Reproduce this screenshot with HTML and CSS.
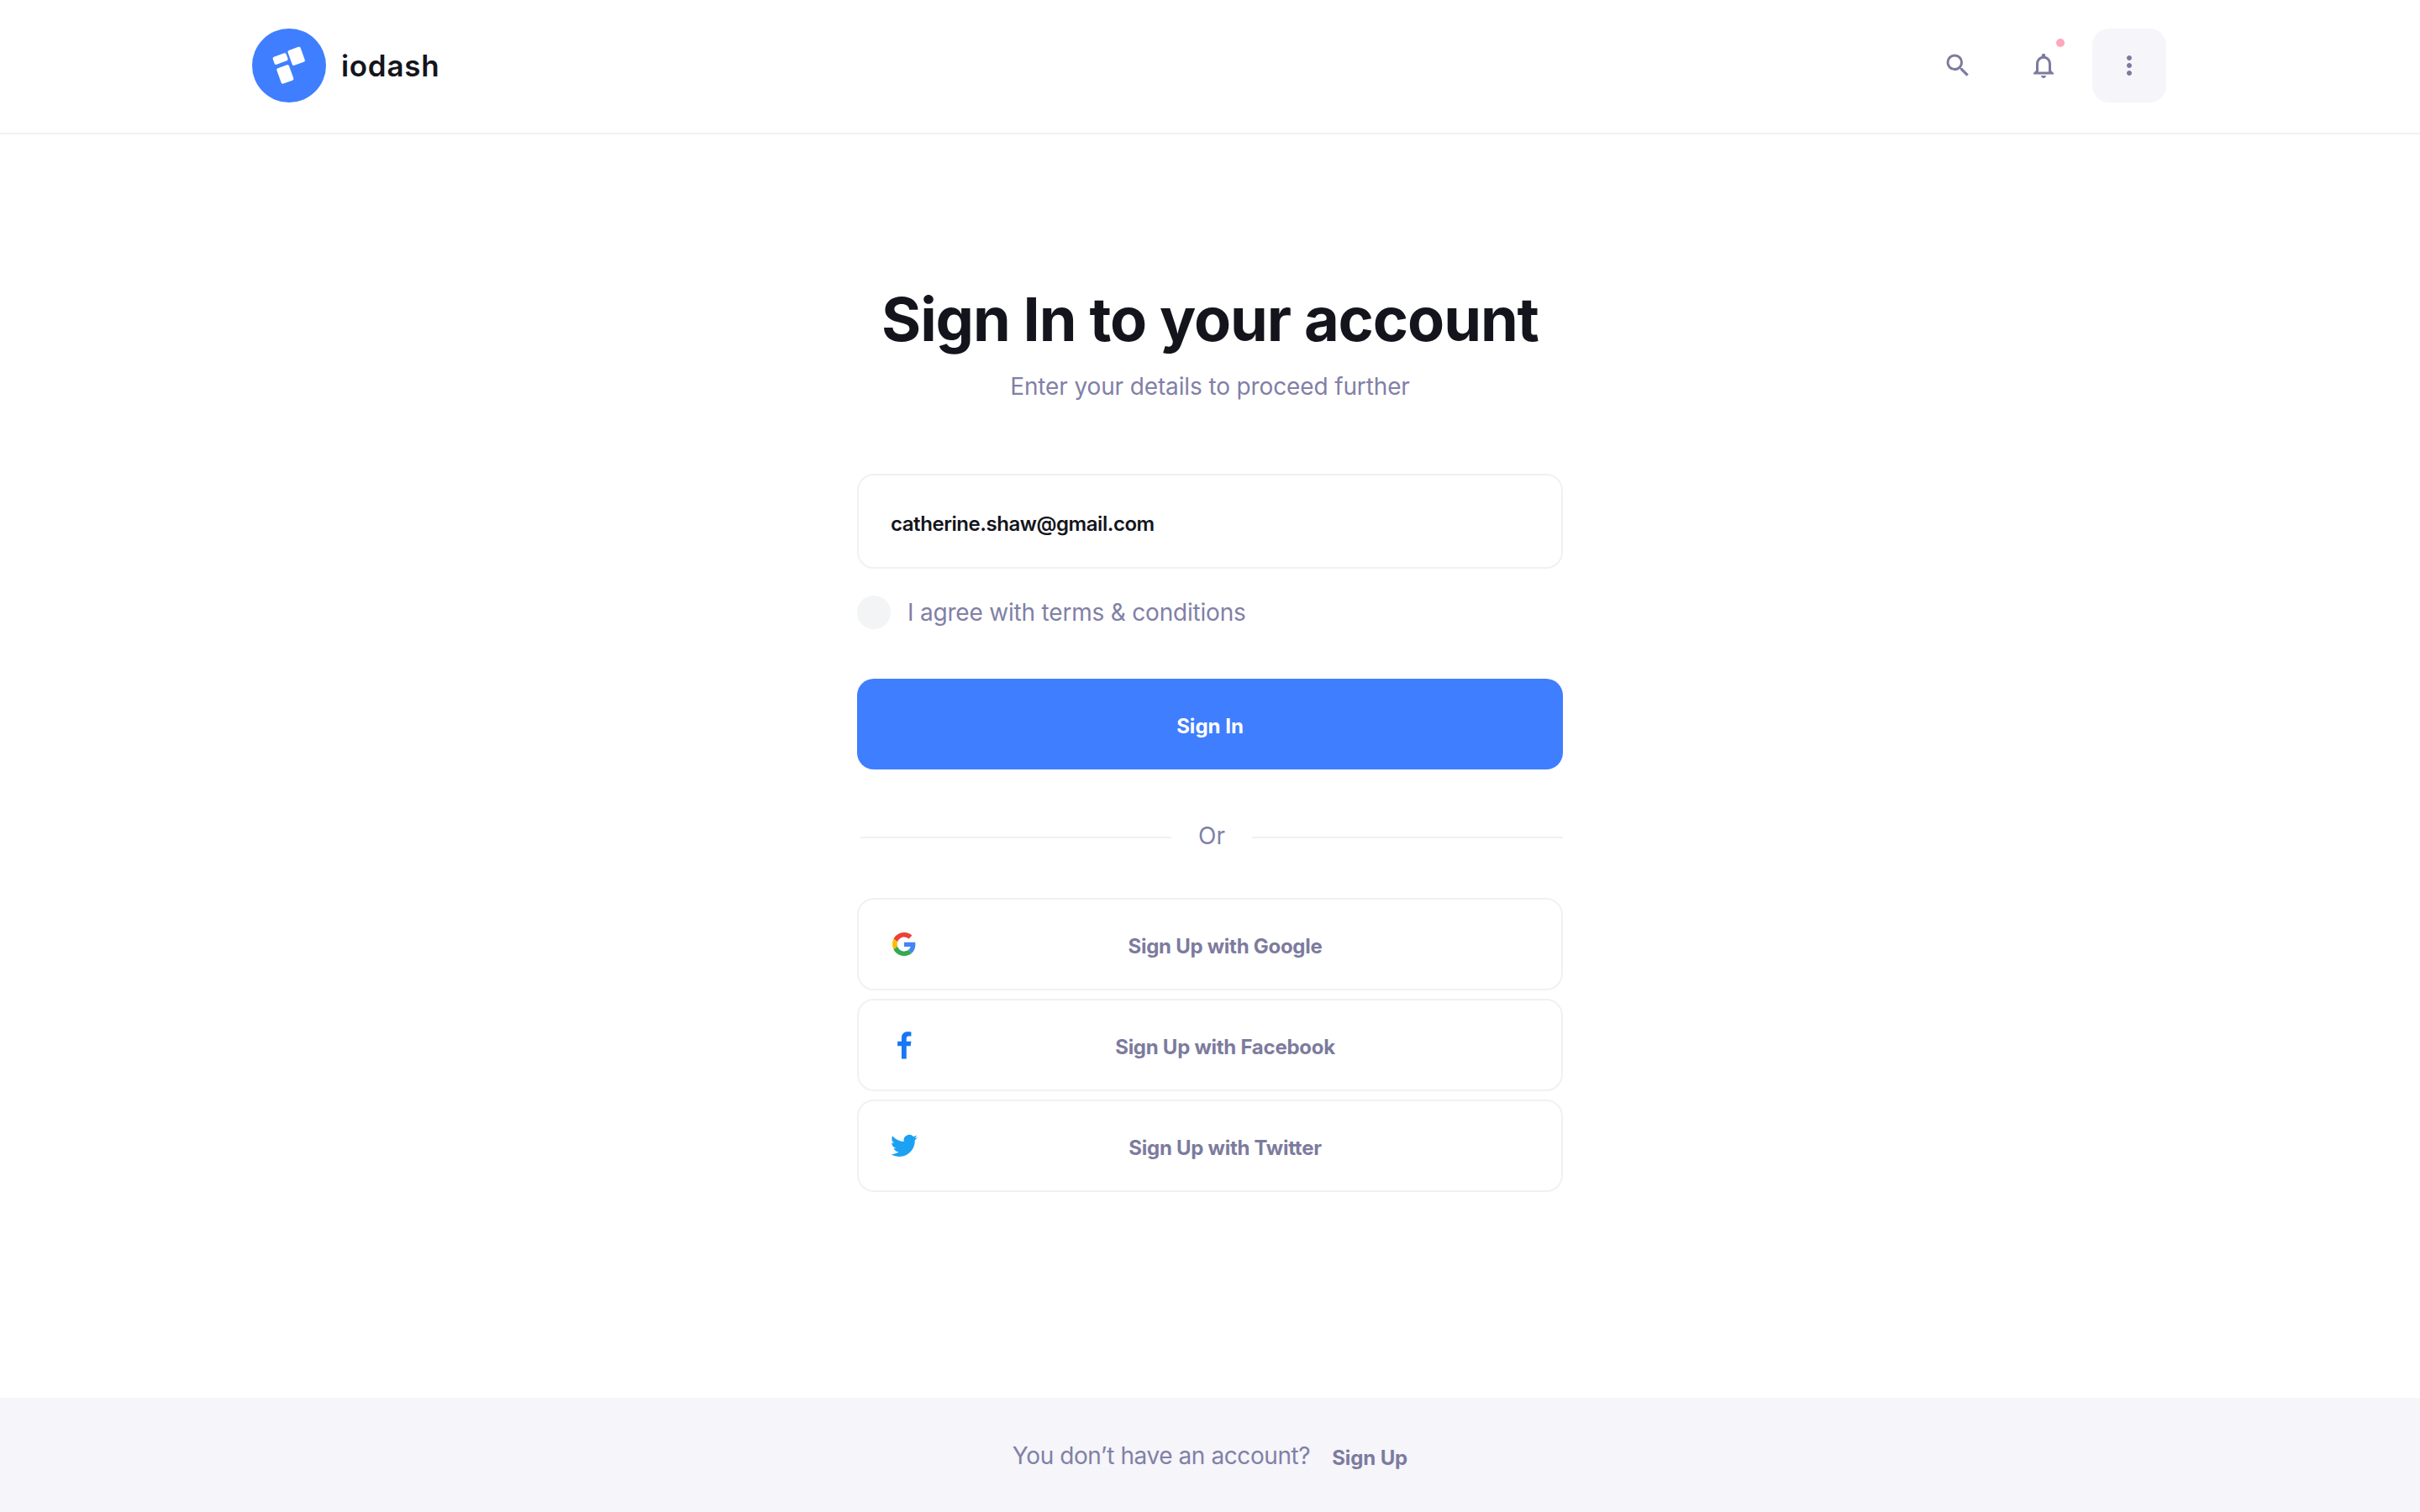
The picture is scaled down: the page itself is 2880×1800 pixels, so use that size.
FILE: index.html
```html
<!DOCTYPE html>
<html lang="en">
<head>
    <meta charset="UTF-8">
    <meta name="viewport" content="width=device-width, initial-scale=1.0">
    <title>Sign In</title>
    <link rel="stylesheet" href="styles.css">
</head>
<body>
<div class="page">
    <header class="top-bar">
        <div class="top-bar-inner">
            <a class="brand" href="#">
                <svg class="brand-mark" viewBox="0 0 88 88">
                    <circle cx="44" cy="44" r="44" fill="#3f7eff"/>
                    <g fill="#fff" transform="rotate(-20 44 44)">
                        <rect x="48" y="27" width="16" height="19" rx="2"/>
                        <rect x="28.5" y="28.2" width="17" height="9.500" rx="2"/>
                        <rect x="28.3" y="42.5" width="15.500" height="19.500" rx="2"/>
                    </g>
                </svg>
                <span class="brand-name">iodash</span>
            </a>
            <nav class="top-actions">
                <button class="icon-button" title="Search">
                    <svg viewBox="0 0 24 24" width="36" height="36"><path fill="#7c7b9e" d="M15.5 14h-.79l-.28-.27A6.47 6.47 0 0 0 16 9.5 6.5 6.5 0 1 0 9.5 16c1.61 0 3.09-.59 4.23-1.57l.27.28v.79l5 4.99L20.49 19l-4.99-5zm-6 0C7.01 14 5 11.99 5 9.5S7.01 5 9.5 5 14 7.01 14 9.5 11.99 14 9.5 14z"/></svg>
                </button>
                <button class="icon-button has-dot" title="Notifications">
                    <svg viewBox="0 0 24 24" width="36" height="36"><path fill="#7c7b9e" d="M12 22c1.1 0 2-.9 2-2h-4c0 1.1.9 2 2 2zm6-6v-5c0-3.07-1.63-5.64-4.5-6.32V4c0-.83-.67-1.5-1.5-1.5s-1.5.67-1.5 1.5v.68C7.64 5.36 6 7.92 6 11v5l-2 2v1h16v-1l-2-2zm-2 1H8v-6c0-2.48 1.51-4.5 4-4.5s4 2.02 4 4.5v6z"/></svg>
                </button>
                <button class="icon-button is-filled" title="More">
                    <svg viewBox="0 0 24 24" width="36" height="36"><path fill="#7c7b9e" d="M12 8c1.1 0 2-.9 2-2s-.9-2-2-2-2 .9-2 2 .9 2 2 2zm0 2c-1.1 0-2 .9-2 2s.9 2 2 2 2-.9 2-2-.9-2-2-2zm0 6c-1.1 0-2 .9-2 2s.9 2 2 2 2-.9 2-2-.9-2-2-2z"/></svg>
                </button>
            </nav>
        </div>
    </header>

    <main class="content">
        <h1 class="title">Sign In to your account</h1>
        <p class="subtitle">Enter your details to proceed further</p>

        <form class="sign-form">
            <div class="email-field">catherine.shaw@gmail.com</div>
            <label class="agree-row">
                <span class="agree-box"></span>
                <span>I agree with terms &amp; conditions</span>
            </label>
            <button type="button" class="btn-primary">Sign In</button>
            <div class="divider"><span>Or</span></div>
            <div class="social-list">
                <button type="button" class="btn-social">
                    <i class="social-icon">
                        <svg viewBox="0 0 48 48" width="28" height="28">
                            <path fill="#ea4335" d="M24 9.5c3.54 0 6.71 1.22 9.21 3.6l6.85-6.85C35.9 2.38 30.47 0 24 0 14.62 0 6.51 5.38 2.56 13.22l7.98 6.19C12.43 13.72 17.74 9.5 24 9.5z"/>
                            <path fill="#4285f4" d="M46.98 24.55c0-1.57-.15-3.09-.38-4.55H24v9.02h12.94c-.58 2.96-2.26 5.48-4.78 7.18l7.73 6c4.51-4.18 7.09-10.36 7.09-17.65z"/>
                            <path fill="#fbbc05" d="M10.53 28.59c-.48-1.45-.76-2.99-.76-4.59s.27-3.14.76-4.59l-7.98-6.19C.92 16.46 0 20.12 0 24c0 3.88.92 7.54 2.56 10.78l7.97-6.19z"/>
                            <path fill="#34a853" d="M24 48c6.48 0 11.93-2.13 15.89-5.81l-7.73-6c-2.15 1.45-4.92 2.3-8.16 2.3-6.26 0-11.57-4.22-13.47-9.91l-7.98 6.19C6.51 42.62 14.62 48 24 48z"/>
                        </svg>
                    </i>
                    <span>Sign Up with Google</span>
                </button>
                <button type="button" class="btn-social">
                    <i class="social-icon">
                        <svg viewBox="7.5 2.3 19 31" width="20" height="33"><path fill="#1877f2" d="M19.6 33V18.6h4.7l.7-5.4h-5.400V10c0-1.600.500-2.600 2.700-2.600H25V2.500C24.500 2.400 22.900 2.300 21 2.300c-4.100 0-6.900 2.500-6.900 7v3.900H9.500v5.400h4.600V33z"/></svg>
                    </i>
                    <span>Sign Up with Facebook</span>
                </button>
                <button type="button" class="btn-social">
                    <i class="social-icon">
                        <svg viewBox="0 0 24 24" width="32" height="32"><path fill="#1da1f2" d="M23.950 4.570a10 10 0 0 1-2.820.770 4.960 4.960 0 0 0 2.160-2.720c-.950.550-2.010.950-3.130 1.180a4.920 4.920 0 0 0-8.380 4.480C7.690 8.090 4.070 6.120 1.640 3.160a4.820 4.820 0 0 0-.660 2.470c0 1.710.870 3.210 2.190 4.100a4.900 4.900 0 0 1-2.230-.620v.060a4.920 4.920 0 0 0 3.950 4.830 5 5 0 0 1-2.210.080 4.940 4.940 0 0 0 4.600 3.420A9.870 9.870 0 0 1 0 19.540a13.940 13.940 0 0 0 7.550 2.210c9.050 0 14-7.500 14-13.980 0-.210 0-.420-.020-.630a9.940 9.940 0 0 0 2.460-2.550z"/></svg>
                    </i>
                    <span>Sign Up with Twitter</span>
                </button>
            </div>
        </form>
    </main>

    <footer class="bottom-bar">
        <span class="bottom-text">You don’t have an account?</span>
        <a class="bottom-link" href="#">Sign Up</a>
    </footer>
</div>
</body>
</html>
```

FILE: styles.css
```css
body {
    font-family: "Inter", "Liberation Sans", sans-serif;
    margin: 0;
    background-color: #fff;
    color: #14151c;
}
.page {
    min-height: 100vh;
    display: flex;
    flex-direction: column;
}
.top-bar {
    height: 158px;
    border-bottom: 2px solid #f1f1f3;
}
.top-bar-inner {
    height: 100%;
    box-sizing: border-box;
    padding: 0 302px 2px 300px;
    display: flex;
    justify-content: space-between;
    align-items: center;
}
.brand {
    display: flex;
    align-items: center;
    gap: 18px;
    text-decoration: none;
    color: #14151c;
}
.brand-mark {
    width: 88px;
    height: 88px;
}
.brand-name {
    font-size: 35px;
    font-weight: 600;
    letter-spacing: 0.7px;
}
.top-actions {
    display: flex;
    gap: 14px;
}
.icon-button {
    width: 88px;
    height: 88px;
    padding: 0;
    border: none;
    border-radius: 20px;
    background-color: transparent;
    display: flex;
    align-items: center;
    justify-content: center;
    position: relative;
    cursor: pointer;
}
.icon-button.is-filled {
    background-color: #f5f5fa;
}
.has-dot::after {
    content: "";
    position: absolute;
    top: 12px;
    left: 59px;
    width: 10px;
    height: 10px;
    border-radius: 50%;
    background-color: #ffa8bb;
}
.content {
    flex: 1;
    display: flex;
    flex-direction: column;
    align-items: center;
    padding-top: 172px;
}
.title {
    margin: 0;
    font-size: 72px;
    line-height: 96px;
    font-weight: 700;
    letter-spacing: -1.1px;
}
.subtitle {
    margin: 14px 0 0;
    font-size: 28px;
    line-height: 36px;
    letter-spacing: -0.13px;
    color: #8180a6;
}
.sign-form {
    width: 840px;
    margin-top: 86px;
}
.email-field {
    height: 113px;
    box-sizing: border-box;
    padding-left: 38px;
    padding-top: 6px;
    display: flex;
    align-items: center;
    border: 2px solid #f1f1f3;
    border-radius: 20px;
    font-size: 24px;
    font-weight: 600;
    letter-spacing: -0.45px;
}
.agree-row {
    display: flex;
    align-items: center;
    gap: 20px;
    margin-top: 32px;
    font-size: 28px;
    letter-spacing: -0.2px;
    color: #8180a6;
}
.agree-box {
    width: 40px;
    height: 40px;
    border-radius: 50%;
    background-color: #f2f4f6;
}
.btn-primary {
    display: block;
    width: 100%;
    height: 108px;
    margin-top: 59px;
    padding-top: 6px;
    border: none;
    border-radius: 20px;
    background-color: #3f7eff;
    color: #fff;
    font-family: inherit;
    font-size: 24px;
    font-weight: 700;
    cursor: pointer;
}
.divider {
    display: flex;
    align-items: center;
    gap: 32px;
    margin-top: 61px;
    padding-left: 4px;
    font-size: 28px;
    line-height: 36px;
    color: #8180a6;
}
.divider::before,
.divider::after {
    content: "";
    flex: 1;
    height: 2px;
    margin-top: 4px;
    background-color: #f1f1f3;
}
.social-list {
    display: flex;
    flex-direction: column;
    gap: 10px;
    margin-top: 56px;
}
.btn-social {
    height: 110px;
    box-sizing: border-box;
    padding: 0 34px 0 38px;
    display: flex;
    align-items: center;
    border: 2px solid #f1f1f3;
    border-radius: 20px;
    background-color: #fff;
    color: #7c7b9e;
    font-family: inherit;
    font-size: 24px;
    font-weight: 700;
    letter-spacing: -0.27px;
    cursor: pointer;
}
.btn-social span {
    flex: 1;
    padding-top: 4px;
    text-align: center;
}
.social-icon {
    width: 32px;
    display: flex;
    justify-content: center;
}
.bottom-bar {
    height: 136px;
    display: flex;
    align-items: center;
    justify-content: center;
    gap: 26px;
    background-color: #f5f5fa;
    color: #8180a6;
}
.bottom-text {
    margin-top: 2px;
    font-size: 28px;
    letter-spacing: -0.42px;
}
.bottom-link {
    margin-top: 7px;
    font-size: 24px;
    font-weight: 700;
    letter-spacing: -0.1px;
    color: #7c7b9e;
    text-decoration: none;
}
```
